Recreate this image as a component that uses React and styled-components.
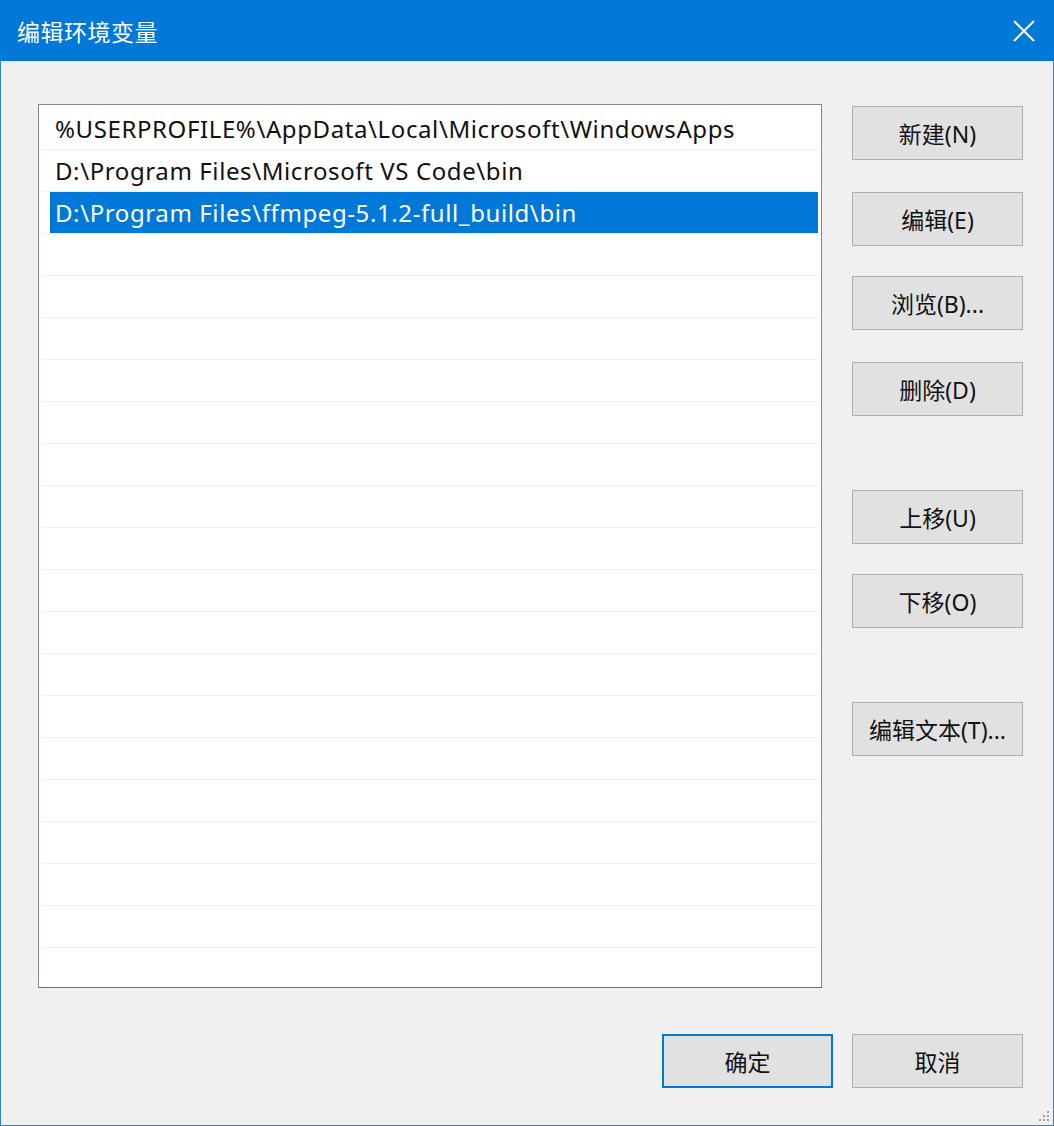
import React from 'react'
import styled, { createGlobalStyle } from 'styled-components'

const Global = createGlobalStyle`
  html, body {
    margin: 0;
    padding: 0;
    background: #f0f0f0;
  }
  body {
    font-family: "Noto Sans", "Noto Sans CJK SC", sans-serif;
  }
`

const Window = styled.div`
  width: 1054px;
  height: 1126px;
  box-sizing: border-box;
  display: flex;
  flex-direction: column;
  background: #f0f0f0;
  border: 1px solid #2b86d4;
  border-top: none;
`

const TitleBar = styled.div`
  height: 61px;
  flex-shrink: 0;
  background: #0078d7;
  display: flex;
  align-items: center;
  justify-content: space-between;
  padding-left: 17px;
  margin: 0 -1px;

  h1 {
    margin: 0;
    color: #fff;
    font-family: "Noto Sans CJK SC", sans-serif;
    font-weight: 400;
    font-size: 23px;
    letter-spacing: 0.5px;
  }
`

const CloseBtn = styled.div`
  width: 60px;
  height: 61px;
  display: flex;
  align-items: center;
  justify-content: center;
`

const Body = styled.div`
  flex: 1;
  display: flex;
  flex-direction: column;
  padding: 43px 30px 0 37px;
  position: relative;
`

const Main = styled.div`
  display: flex;
  gap: 30px;
`

const List = styled.div`
  width: 784px;
  height: 884px;
  box-sizing: border-box;
  background: #fff;
  border: 1px solid #82868f;
  border-bottom-color: #6b6b6b;
  padding: 3px 3px 0 3px;
  overflow: hidden;
`

const Row = styled.div`
  height: 41px;
  border-bottom: 1px solid #efeff2;
  padding-left: 8px;
  display: flex;
`

const Cell = styled.div`
  flex: 1;
  display: flex;
  align-items: center;
  padding-left: 5px;
  font-size: 24px;
  letter-spacing: 0.6px;
  color: ${p => (p.selected ? '#fff' : '#111')};
  background: ${p => (p.selected ? '#0078d7' : 'transparent')};
  white-space: nowrap;
`

const Side = styled.div`
  display: flex;
  flex-direction: column;
  padding-top: 2px;
`

const Button = styled.button`
  width: 171px;
  height: 54px;
  box-sizing: border-box;
  margin-top: ${p => p.gap || 0}px;
  background: #e1e1e1;
  border: ${p => (p.primary ? '2px solid #0078d7' : '1px solid #adadad')};
  font-family: "Noto Sans", "Noto Sans CJK SC", sans-serif;
  font-size: 23px;
  color: #111;
  padding: 0;
  display: flex;
  align-items: center;
  justify-content: center;
`

const Footer = styled.div`
  display: flex;
  justify-content: flex-end;
  gap: 19px;
  margin-top: 46px;
`

const Grip = styled.svg`
  position: absolute;
  right: 3px;
  bottom: 3px;
`

const paths = [
  '%USERPROFILE%\\AppData\\Local\\Microsoft\\WindowsApps',
  'D:\\Program Files\\Microsoft VS Code\\bin',
  'D:\\Program Files\\ffmpeg-5.1.2-full_build\\bin',
]

const sideButtons = [
  { label: '新建(N)', gap: 0 },
  { label: '编辑(E)', gap: 32 },
  { label: '浏览(B)...', gap: 30 },
  { label: '删除(D)', gap: 32 },
  { label: '上移(U)', gap: 74 },
  { label: '下移(O)', gap: 30 },
  { label: '编辑文本(T)...', gap: 74 },
]

export default function App() {
  const rows = Array.from({ length: 21 }, (_, i) => paths[i] || '')
  return (
    <Window>
      <Global />
      <TitleBar>
        <h1>编辑环境变量</h1>
        <CloseBtn>
          <svg width="22" height="22" viewBox="0 0 22 22">
            <path d="M1 1L21 21M21 1L1 21" stroke="#fff" strokeWidth="2" />
          </svg>
        </CloseBtn>
      </TitleBar>
      <Body>
        <Main>
          <List>
            {rows.map((t, i) => (
              <Row key={i}>
                <Cell selected={i === 2}>{t}</Cell>
              </Row>
            ))}
          </List>
          <Side>
            {sideButtons.map(b => (
              <Button key={b.label} gap={b.gap}>{b.label}</Button>
            ))}
          </Side>
        </Main>
        <Footer>
          <Button primary>确定</Button>
          <Button>取消</Button>
        </Footer>
        <Grip width="12" height="12" viewBox="0 0 12 12">
          <rect x="9" y="1" width="2" height="2" fill="#a0a0a0" />
          <rect x="5" y="5" width="2" height="2" fill="#a0a0a0" />
          <rect x="9" y="5" width="2" height="2" fill="#a0a0a0" />
          <rect x="1" y="9" width="2" height="2" fill="#a0a0a0" />
          <rect x="5" y="9" width="2" height="2" fill="#a0a0a0" />
          <rect x="9" y="9" width="2" height="2" fill="#a0a0a0" />
        </Grip>
      </Body>
    </Window>
  )
}
